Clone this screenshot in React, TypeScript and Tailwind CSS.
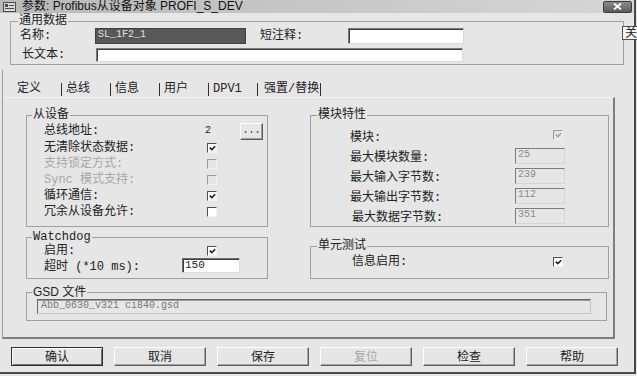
import type { ReactNode } from 'react'

interface GroupProps {
  label: string
  className: string
  legendClass?: string
  children: ReactNode
}

function Group({ label, className, legendClass = 'ml-[5px]', children }: GroupProps) {
  return (
    <fieldset className={`border border-[#a0a0a0] p-0 ${className}`}>
      <legend className={`px-[1px] text-[12px] leading-[14px] ${legendClass}`}>{label}</legend>
      {children}
    </fieldset>
  )
}

function CheckBox({ checked = false, disabled = false }: { checked?: boolean; disabled?: boolean }) {
  const box = disabled
    ? 'border-t-[#9c9c9c] border-l-[#9c9c9c] border-r-[#f3f3f3] border-b-[#f3f3f3] bg-[#e6e6e6]'
    : 'border-t-[#505050] border-l-[#505050] border-r-[#f3f3f3] border-b-[#f3f3f3] bg-white'
  return (
    <span className={`flex h-[10px] w-[10px] items-center justify-center border ${box}`}>
      {checked && (
        <svg width="7" height="6" viewBox="0 0 7 6">
          <path
            d="M0.8 2.6 L2.8 4.6 L6.2 1.2"
            fill="none"
            stroke={disabled ? '#a0a0a0' : '#1a1a1a'}
            strokeWidth="1.5"
          />
        </svg>
      )}
    </span>
  )
}

function ReadField({ value }: { value: string }) {
  return (
    <span className="h-[16px] w-[50px] border border-t-[#7c7c7c] border-l-[#7c7c7c] border-r-[#d4d4d4] border-b-[#d4d4d4] bg-[#e6e6e6] pl-[2px] text-[10px] leading-[11px] text-[#8a8a8a]">
      {value}
    </span>
  )
}

const slaveRows = [
  { label: '无清除状态数据:', checked: true, disabled: false },
  { label: '支持锁定方式:', checked: false, disabled: true },
  { label: 'Sync 模式支持:', checked: false, disabled: true },
  { label: '循环通信:', checked: true, disabled: false },
  { label: '冗余从设备允许:', checked: false, disabled: false },
]

const moduleRows = [
  { label: '最大模块数量:', value: '25' },
  { label: '最大输入字节数:', value: '239' },
  { label: '最大输出字节数:', value: '112' },
  { label: '最大数据字节数:', value: '351' },
]

const tabs = ['总线', '信息', '用户', 'DPV1']

const buttons = [
  { label: '确认', primary: true },
  { label: '取消' },
  { label: '保存' },
  { label: '复位', disabled: true },
  { label: '检查' },
  { label: '帮助' },
]

export default function App() {
  return (
    <div className="relative h-[376px] w-[637px] overflow-hidden bg-[#e6e6e6] font-['Liberation_Mono','Noto_Sans_CJK_SC',monospace] text-[#222222]">
      <div className="flex h-[374px] w-[636px] flex-col border-r-2 border-b-2 border-[#4a4a4a]">
        {/* title bar */}
        <div className="flex h-[13px] items-center bg-gradient-to-r from-[#b8b8b8] to-[#d6d6d6]">
          <svg className="ml-[3px]" width="13" height="10" viewBox="0 0 13 10">
            <rect x="0" y="0" width="13" height="10" fill="#4a4a4a" />
            <rect x="1" y="1" width="11" height="8" fill="#d8d8d8" />
            <rect x="2" y="2" width="3" height="3" fill="#4a4a4a" />
            <rect x="6" y="3" width="5" height="1" fill="#4a4a4a" />
            <rect x="2" y="6" width="9" height="1" fill="#4a4a4a" />
          </svg>
          <span className="ml-[6px] font-['Liberation_Sans','Noto_Sans_CJK_SC',sans-serif] text-[12px] leading-[13px] text-[#111111]">
            参数: Profibus从设备对象 PROFI_S_DEV
          </span>
          <span className="mr-[2px] ml-auto flex h-[12px] w-[29px] items-center justify-center rounded-[2px] border border-[#3c3c3c] bg-gradient-to-b from-[#8c8c8c] to-[#5c5c5c]">
            <svg width="9" height="7" viewBox="0 0 9 7">
              <path d="M1 0.5 L8 6.5 M8 0.5 L1 6.5" stroke="#ffffff" strokeWidth="1.8" />
            </svg>
          </span>
        </div>

        {/* general data */}
        <Group label="通用数据" className="mt-[1px] ml-[10px] h-[51px] w-[614px]" legendClass="ml-[7px]">
          <div className="pl-[9px] text-[12px]">
            <div className="flex h-[16px] items-center">
              <span className="w-[75px] leading-[14px]">名称:</span>
              <span className="h-[16px] w-[151px] border border-[#404040] bg-[#585858] pl-[2px] text-[10px] leading-[12px] text-[#e2e2e2]">
                SL_1F2_1
              </span>
              <span className="ml-[14px] w-[88px] leading-[14px]">短注释:</span>
              <span className="h-[16px] w-[116px] border border-t-[#7a7a7a] border-l-[#7a7a7a] border-r-[#dadada] border-b-[#dadada] bg-white shadow-[inset_1px_1px_0_#3c3c3c]" />
            </div>
            <div className="mt-[4px] flex h-[14px] items-center">
              <span className="ml-[2px] w-[74px] leading-[14px]">长文本:</span>
              <span className="h-[14px] w-[367px] border border-t-[#7a7a7a] border-l-[#7a7a7a] border-r-[#dadada] border-b-[#dadada] bg-white shadow-[inset_1px_1px_0_#3c3c3c]" />
            </div>
          </div>
        </Group>

        {/* tabs and panel share the dialog's left edge */}
        <div className="mt-[5px] ml-[2px] border-l border-[#9a9a9a] pt-[12px]">
          <div className="ml-[9px] flex h-[14px] items-center text-[12px] leading-[14px]">
            <span className="w-[49px] pl-[5px]">定义</span>
            {tabs.map((t) => (
              <span key={t} className="flex w-[49px] items-center">
                <span className="mr-[4px] h-[13px] border-l border-[#303030]" />
                {t}
              </span>
            ))}
            <span className="flex items-center">
              <span className="mr-[6px] h-[13px] border-l border-[#303030]" />
              强置/替换
              <span className="ml-[1px] h-[13px] border-l border-[#303030]" />
            </span>
          </div>

          {/* tab panel */}
          <div className="mt-[1px] h-[242px] w-[612px] border-t border-r-2 border-b-2 border-t-[#f4f4f4] border-r-[#7e7e7e] border-b-[#7e7e7e] pt-[10px] pl-[23px] text-[12px]">
            <div className="flex gap-[42px]">
              <Group label="从设备" className="h-[119px] w-[242px]">
                <div className="pl-[17px]">
                  <div className="flex h-[18px] items-center">
                    <span className="w-[161px] leading-[14px]">总线地址:</span>
                    <span className="w-[35px] text-[10px] leading-[12px]">2</span>
                    <span className="flex h-[17px] w-[23px] items-center justify-center border border-t-white border-l-white border-r-[#5a5a5a] border-b-[#5a5a5a] text-[10px] leading-[10px] shadow-[inset_-1px_-1px_0_#a0a0a0]">
                      ...
                    </span>
                  </div>
                  {slaveRows.map((r) => (
                    <div key={r.label} className="flex h-[16px] items-center">
                      <span className={r.disabled ? 'w-[163px] leading-[14px] text-[#a6a6a6]' : 'w-[163px] leading-[14px]'}>
                        {r.label}
                      </span>
                      <CheckBox checked={r.checked} disabled={r.disabled} />
                    </div>
                  ))}
                </div>
              </Group>

              <Group label="模块特性" className="h-[119px] w-[299px]" legendClass="ml-[6px]">
                <div className="pl-[39px]">
                  <div className="flex h-[26px] items-start">
                    <span className="mt-[9px] w-[203px] leading-[14px]">模块:</span>
                    <span className="mt-[8px]">
                      <CheckBox checked disabled />
                    </span>
                  </div>
                  {moduleRows.map((r, i) => (
                    <div key={r.label} className="flex h-[20px] items-start">
                      <span className={i === 3 ? 'mt-[3px] ml-[2px] w-[163px] leading-[14px]' : 'mt-[3px] w-[165px] leading-[14px]'}>
                        {r.label}
                      </span>
                      <ReadField value={r.value} />
                    </div>
                  ))}
                </div>
              </Group>
            </div>

            <div className="mt-[3px] flex items-end gap-[42px]">
              <Group label="Watchdog" className="h-[49px] w-[242px]" legendClass="ml-[5px] text-[11px]">
                <div className="pl-[17px]">
                  <div className="flex h-[14px] items-center">
                    <span className="w-[163px] leading-[14px]">启用:</span>
                    <CheckBox checked />
                  </div>
                  <div className="flex h-[16px] items-start">
                    <span className="mt-[2px] w-[138px] leading-[14px]">超时 (*10 ms):</span>
                    <span className="h-[15px] w-[58px] border border-t-[#6e6e6e] border-l-[#6e6e6e] border-r-[#dcdcdc] border-b-[#dcdcdc] bg-white pl-[2px] text-[11px] leading-[12px] shadow-[inset_1px_1px_0_#3c3c3c]">
                      150
                    </span>
                  </div>
                </div>
              </Group>

              <Group label="单元测试" className="h-[40px] w-[299px]" legendClass="ml-[6px]">
                <div className="flex h-[18px] items-center pl-[41px]">
                  <span className="w-[201px] leading-[14px]">信息启用:</span>
                  <CheckBox checked />
                </div>
              </Group>
            </div>

            <Group
              label="GSD 文件"
              className="mt-[7px] h-[35px] w-[581px]"
              legendClass="ml-[5px] font-['Liberation_Sans','Noto_Sans_CJK_SC',sans-serif] !leading-[13px]"
            >
              <div className="ml-[10px] h-[15px] w-[554px] border border-t-[#666666] border-l-[#666666] border-r-[#c4c4c4] border-b-[#c4c4c4] pl-[3px] text-[10px] leading-[12px] text-[#7a7a7a] shadow-[inset_0_1px_0_#9a9a9a]">
                Abb_0630_v321 ci840.gsd
              </div>
            </Group>
          </div>
        </div>

        {/* buttons */}
        <div className="mt-[8px] ml-[11px] flex gap-[11px] font-['Liberation_Sans','Noto_Sans_CJK_SC',sans-serif] text-[12px]">
          {buttons.map((b) => (
            <span
              key={b.label}
              className={
                b.primary
                  ? 'flex h-[19px] w-[92px] items-center justify-center border border-[#2e2e2e] shadow-[inset_1px_1px_0_#ffffff,inset_-1px_-1px_0_#707070]'
                  : b.disabled
                    ? 'flex h-[19px] w-[92px] items-center justify-center border border-t-white border-l-white border-r-[#5e5e5e] border-b-[#5e5e5e] text-[#a8a8a8] shadow-[inset_-1px_-1px_0_#a4a4a4]'
                    : 'flex h-[19px] w-[92px] items-center justify-center border border-t-white border-l-white border-r-[#5e5e5e] border-b-[#5e5e5e] shadow-[inset_-1px_-1px_0_#a4a4a4]'
              }
            >
              {b.label}
            </span>
          ))}
        </div>
      </div>

      {/* close tooltip */}
      <span className="absolute top-[26px] left-[622px] h-[14px] w-[20px] border border-[#505050] bg-[#f7f7f7] pl-[2px] font-['Liberation_Sans','Noto_Sans_CJK_SC',sans-serif] text-[12px] leading-[12px]">
        关
      </span>
    </div>
  )
}
